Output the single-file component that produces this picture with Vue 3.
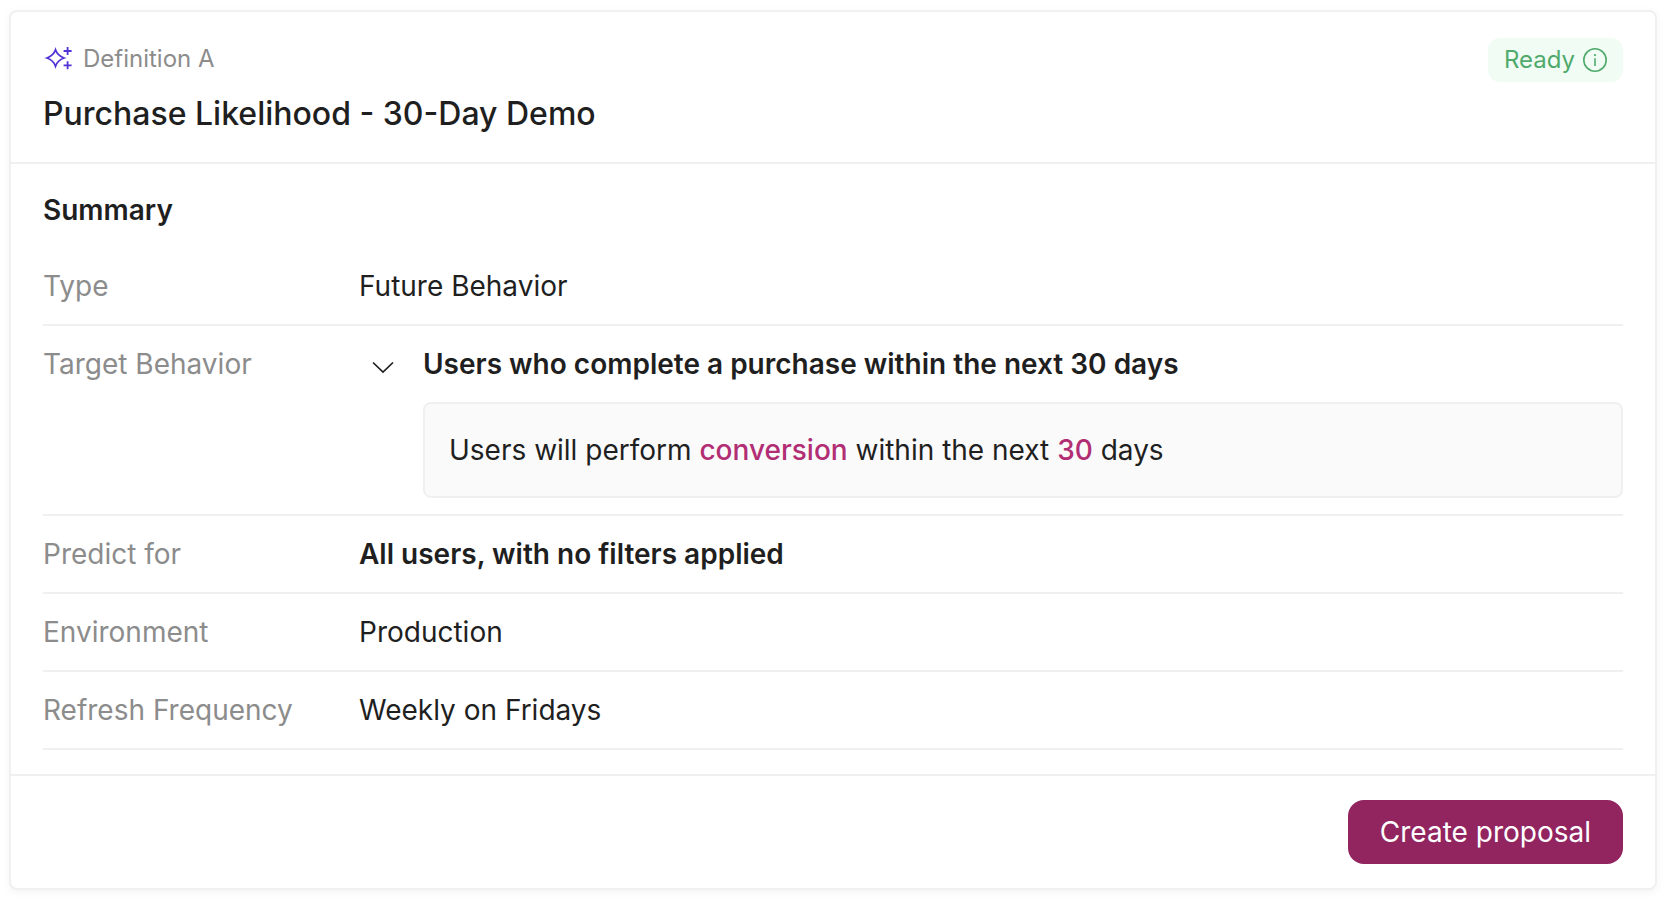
<script setup>
import { ref } from 'vue'

const expanded = ref(true)
</script>

<template>
  <main class="page">
    <article class="card">
      <header class="card-header">
        <div class="heading">
          <p class="eyebrow">
            <svg class="sparkle" viewBox="0 0 32 32" aria-hidden="true">
              <path d="M12.5 6.8C13.8 10.6 16.2 13.3 21 15C16.2 16.7 13.8 19.4 12.5 23.2C11.2 19.4 8.8 16.7 4 15C8.8 13.3 11.2 10.6 12.5 6.8Z" />
              <path d="M24.6 4v8M20.6 8h8M24.6 18.3v8M20.6 22.3h8" />
            </svg>
            Definition A
          </p>
          <h1 class="title">Purchase Likelihood - 30-Day Demo</h1>
        </div>
        <span class="badge">
          Ready
          <svg class="info" viewBox="0 0 24 24" aria-hidden="true">
            <circle cx="12" cy="12" r="11.2" />
            <path d="M12 10.2V18" />
            <circle class="dot" cx="12" cy="7.1" r="1.1" />
          </svg>
        </span>
      </header>

      <section class="card-body">
        <h2 class="subtitle">Summary</h2>
        <dl class="rows">
          <div class="row">
            <dt>Type</dt>
            <dd>Future Behavior</dd>
          </div>
          <div class="row">
            <dt>Target Behavior</dt>
            <dd class="target">
              <button
                class="toggle"
                type="button"
                aria-label="Toggle target behavior details"
                :aria-expanded="expanded"
                @click="expanded = !expanded"
              >
                <svg class="chevron" viewBox="0 0 24 24" aria-hidden="true">
                  <path d="M2 8.5L12 18L22 8.5" />
                </svg>
              </button>
              <div class="target-content">
                <strong>Users who complete a purchase within the next 30 days</strong>
                <p v-if="expanded" class="rule">
                  Users will perform <em>conversion</em> within the next <em>30</em> days
                </p>
              </div>
            </dd>
          </div>
          <div class="row">
            <dt>Predict for</dt>
            <dd><strong>All users, with no filters applied</strong></dd>
          </div>
          <div class="row">
            <dt>Environment</dt>
            <dd>Production</dd>
          </div>
          <div class="row">
            <dt>Refresh Frequency</dt>
            <dd>Weekly on Fridays</dd>
          </div>
        </dl>
      </section>

      <footer class="card-footer">
        <button class="primary" type="button">Create proposal</button>
      </footer>
    </article>
  </main>
</template>

<style>
body {
  margin: 0;
  background: #fff;
}
</style>

<style scoped>
.page {
  padding: 10px 9px 12px;
  font-family: Inter, "Liberation Sans", sans-serif;
  font-size: 28px;
  line-height: 44px;
  color: #1f1f1f;
}

.card {
  border: 2px solid #f0f0f0;
  border-radius: 8px;
  background: #fff;
  box-shadow: 0 2px 8px rgba(0, 0, 0, 0.05);
}

.card-header {
  display: flex;
  justify-content: space-between;
  align-items: flex-start;
  padding: 26px 32px 24px;
  border-bottom: 2px solid #f0f0f0;
}

.heading {
  display: flex;
  flex-direction: column;
  gap: 10px;
}

.eyebrow {
  display: flex;
  align-items: center;
  gap: 8px;
  margin: 0;
  font-size: 24px;
  line-height: 42px;
  color: #8c8c8c;
}

.sparkle {
  width: 32px;
  height: 32px;
  fill: none;
  stroke: #5232d6;
  stroke-width: 1.8;
}

.title {
  margin: 0;
  font-size: 32px;
  line-height: 48px;
  font-weight: 500;
}

.badge {
  display: flex;
  align-items: center;
  gap: 8px;
  padding: 0 16px;
  border-radius: 12px;
  background: #f0fcf4;
  color: #50aa6c;
  font-size: 24px;
}

.info {
  width: 24px;
  height: 24px;
  fill: none;
  stroke: currentColor;
  stroke-width: 1.6;
}

.info .dot {
  fill: currentColor;
  stroke: none;
}

.card-body {
  padding: 24px 32px;
}

.subtitle {
  margin: 0 0 16px;
  font-size: 28px;
  line-height: 44px;
  font-weight: 600;
}

.rows {
  margin: 0;
}

.row {
  display: grid;
  grid-template-columns: 1fr 4fr;
  padding: 16px 0;
  border-bottom: 2px solid #f0f0f0;
}

dt {
  color: #8c8c8c;
}

dd {
  margin: 0;
}

strong {
  display: block;
  font-weight: 600;
}

.target {
  display: flex;
  align-items: flex-start;
  gap: 16px;
}

.toggle {
  display: flex;
  align-items: center;
  justify-content: center;
  width: 48px;
  height: 48px;
  padding: 0;
  border: 0;
  background: none;
  color: #1f1f1f;
  cursor: pointer;
}

.chevron {
  width: 24px;
  height: 24px;
  fill: none;
  stroke: currentColor;
  stroke-width: 1.7;
}

.toggle[aria-expanded="false"] .chevron {
  transform: rotate(-90deg);
}

.target-content {
  flex: 1;
}

.rule {
  margin: 16px 0 0;
  padding: 24px;
  border: 2px solid #f0f0f0;
  border-radius: 8px;
  background: #fafafa;
}

em {
  font-style: normal;
  font-weight: 500;
  color: #b22e74;
}

.card-footer {
  display: flex;
  justify-content: flex-end;
  padding: 24px 32px;
  border-top: 2px solid #f0f0f0;
}

.primary {
  height: 64px;
  padding: 0 32px;
  border: 0;
  border-radius: 16px;
  background: #92245f;
  color: #fff;
  font: inherit;
  cursor: pointer;
}
</style>
